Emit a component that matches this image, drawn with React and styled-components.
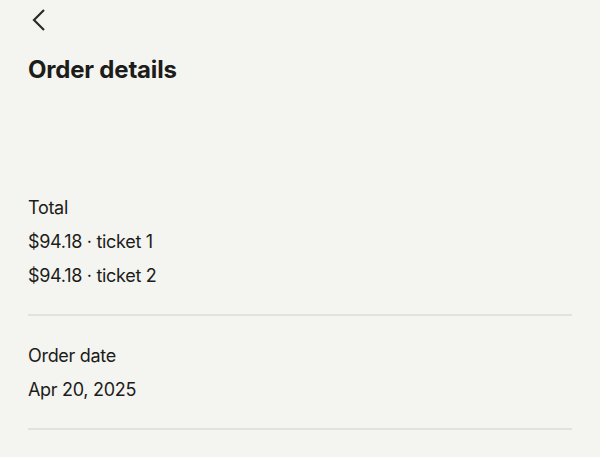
import React from 'react';
import styled, { createGlobalStyle } from 'styled-components';

const GlobalStyle = createGlobalStyle`
  body {
    margin: 0;
    background: #f4f4f0;
    font-family: Inter, 'Noto Sans', sans-serif;
    color: #1c1c1a;
  }
`;

const Page = styled.div`
  padding: 0 28px;
`;

const BackButton = styled.button`
  display: flex;
  align-items: center;
  background: none;
  border: 0;
  padding: 0;
  margin: 8px 0 0 2px;
  height: 24px;
  color: #2a2a28;
  cursor: pointer;
`;

const Title = styled.h1`
  margin: 23px 0 0;
  font-size: 24px;
  font-weight: 700;
  letter-spacing: -0.2px;
  line-height: 30px;
`;

const Section = styled.section`
  padding: ${(p) => (p.$first ? '106px' : '23px')} 0 21px;
  border-bottom: 2px solid #e2e2dd;
`;

const Line = styled.div`
  font-size: 18px;
  line-height: 34px;
  letter-spacing: -0.3px;
`;

const App = () => (
  <>
    <GlobalStyle />
    <Page>
      <BackButton aria-label="Back">
        <svg width="16" height="24" viewBox="0 0 16 24" fill="none">
          <path d="M14 2 L4 12 L14 22" stroke="currentColor" strokeWidth="2.2" />
        </svg>
      </BackButton>
      <Title>Order details</Title>
      <Section $first>
        <Line>Total</Line>
        <Line>$94.18 · ticket 1</Line>
        <Line>$94.18 · ticket 2</Line>
      </Section>
      <Section>
        <Line>Order date</Line>
        <Line>Apr 20, 2025</Line>
      </Section>
    </Page>
  </>
);

export default App;
